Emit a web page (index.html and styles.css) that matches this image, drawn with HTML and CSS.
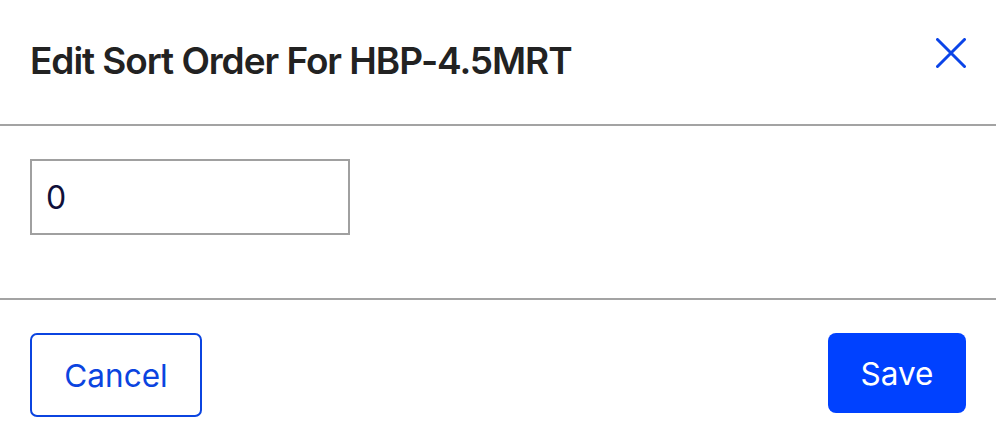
FILE: index.html
```html
<!DOCTYPE html>
<html>
<head>
<meta charset="utf-8">
<link rel="stylesheet" href="styles.css">
</head>
<body>
<div class="modal">
  <header class="modal-header">
    <h1 class="title">Edit Sort Order For HBP-4.5MRT</h1>
    <button class="close" aria-label="Close">
      <svg width="30" height="30" viewBox="0 0 30 30"><path d="M1.5 1.5 L28.5 28.5 M28.5 1.5 L1.5 28.5" stroke="#0b44e8" stroke-width="3" stroke-linecap="round" fill="none"/></svg>
    </button>
  </header>
  <section class="modal-body">
    <input class="field" type="text" value="0">
  </section>
  <footer class="modal-footer">
    <button class="btn btn-cancel">Cancel</button>
    <button class="btn btn-save">Save</button>
  </footer>
</div>
</body>
</html>
```
FILE: styles.css
```css
* { box-sizing: border-box; }
html, body { margin: 0; padding: 0; background: #fff; }
body { font-family: Inter, "Liberation Sans", sans-serif; width: 996px; height: 444px; overflow: hidden; }
.modal { display: flex; flex-direction: column; }
.modal-header {
  height: 126px;
  border-bottom: 2px solid #a3a3a3;
  display: flex;
  align-items: flex-start;
  justify-content: space-between;
  padding: 0 30px 0 30px;
}
.title {
  margin: 0;
  padding-top: 40px;
  font-size: 37px;
  font-weight: 600;
  color: #222;
  line-height: 42px;
  letter-spacing: -1.05px;
}
.close {
  margin-top: 38px;
  background: none;
  border: 0;
  padding: 0;
  width: 30px;
  height: 30px;
  cursor: pointer;
}
.close svg { display: block; }
.modal-body {
  height: 174px;
  border-bottom: 2px solid #a3a3a3;
  padding: 33px 30px 0;
}
.field {
  display: block;
  width: 320px;
  height: 76px;
  border: 2px solid #a0a0a0;
  border-radius: 0;
  padding: 0 14px;
  font-family: Inter, "Liberation Sans", sans-serif;
  font-size: 32px;
  color: #10103a;
  outline: none;
}
.modal-footer {
  display: flex;
  justify-content: space-between;
  align-items: flex-start;
  padding: 33px 30px 0 30px;
}
.btn {
  font-family: Inter, "Liberation Sans", sans-serif;
  font-size: 31.5px;
  font-weight: 400;
  cursor: pointer;
  padding: 0;
}
.btn-cancel {
  width: 172px;
  height: 84px;
  background: #fff;
  border: 2px solid #0b44e0;
  border-radius: 7px;
  color: #0b44e0;
}
.btn-save {
  width: 138px;
  height: 80px;
  background: #0041ff;
  border: 0;
  border-radius: 8px;
  color: #fff;
}
```
